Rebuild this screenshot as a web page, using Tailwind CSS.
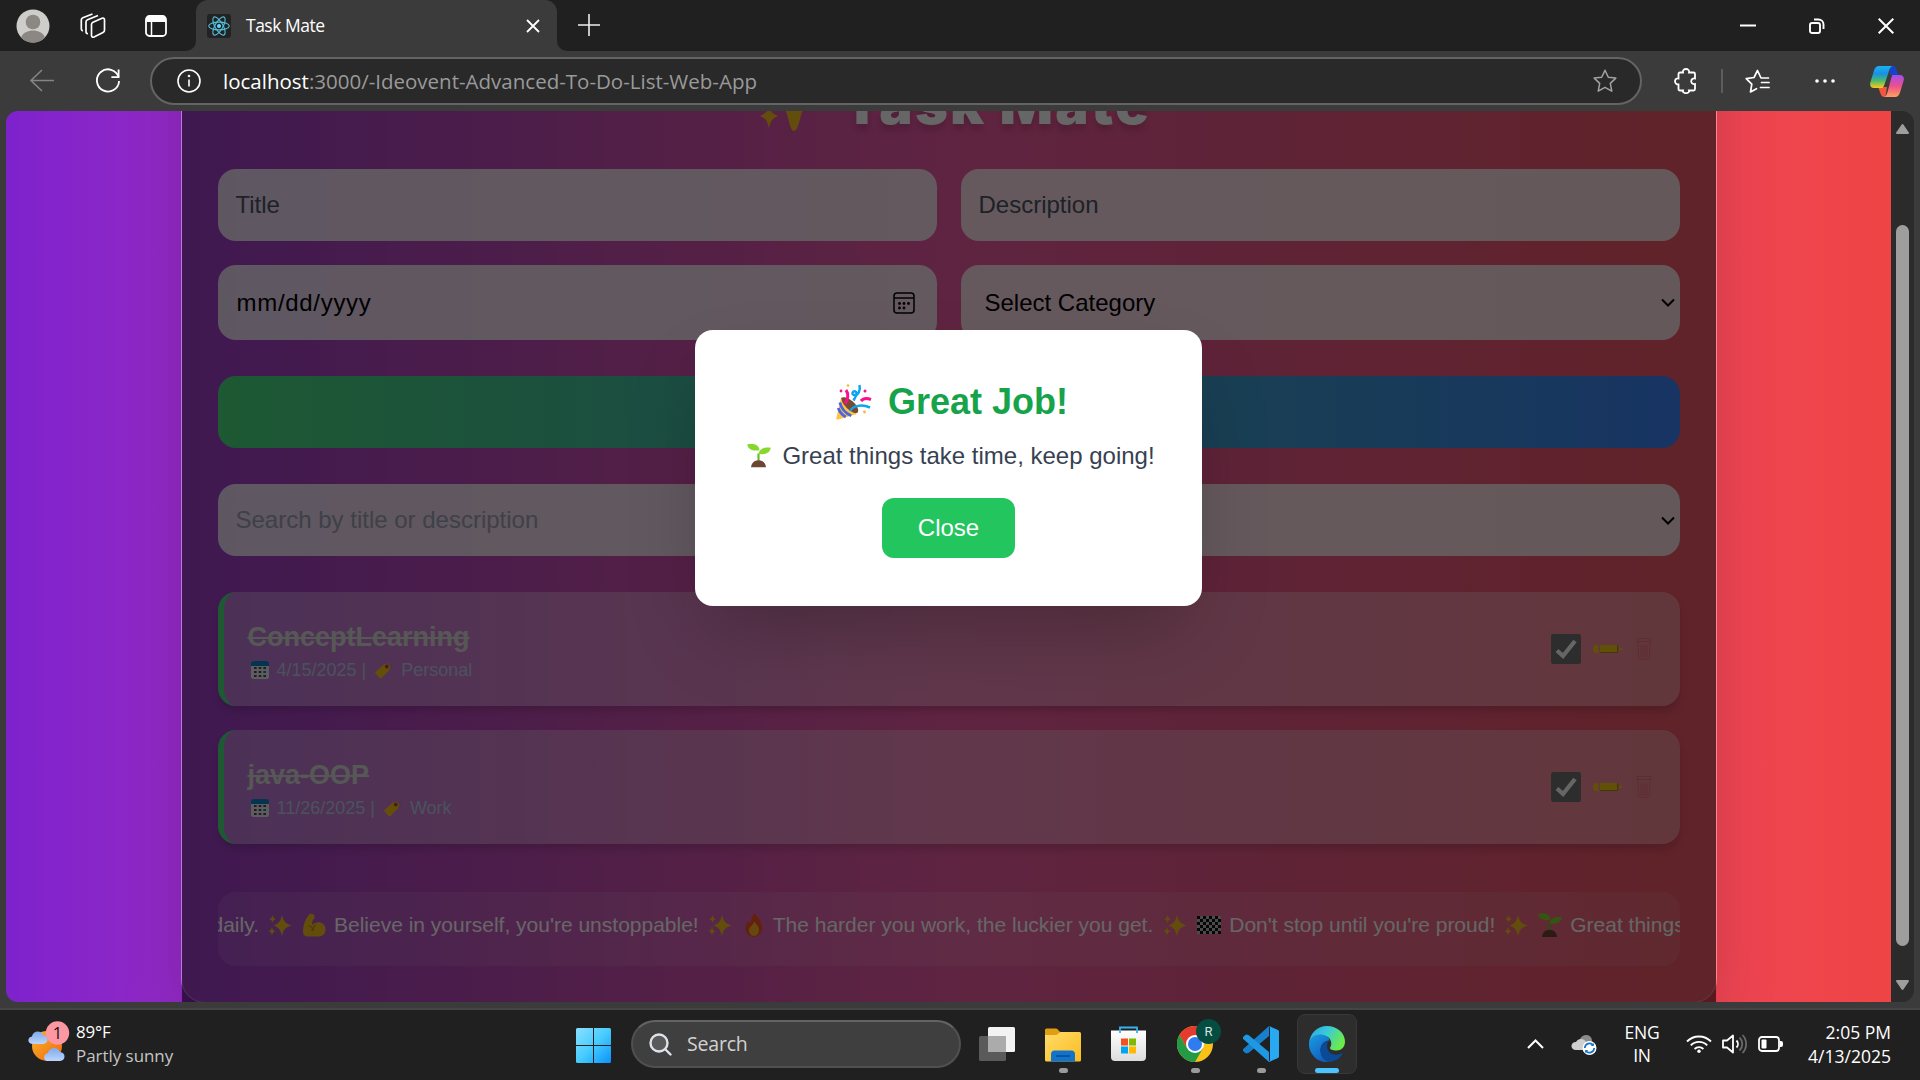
<!DOCTYPE html>
<html lang="en">
<head>
<meta charset="utf-8">
<title>Task Mate</title>
<script src="https://cdn.jsdelivr.net/npm/@tailwindcss/browser@4"></script>
</head>
<body class="w-[1920px] h-[1080px] overflow-hidden bg-[#3b3b3b] font-['Open_Sans',sans-serif] text-white">
<svg class="absolute w-0 h-0">
  <defs>
    <linearGradient id="sun" x1="0" y1="0" x2="1" y2="1"><stop offset="0" stop-color="#f9b52b"/><stop offset="1" stop-color="#f0660c"/></linearGradient>
    <linearGradient id="cloud" x1="0" y1="0" x2="0" y2="1"><stop offset="0" stop-color="#7fa9ee"/><stop offset="1" stop-color="#bcd5fb"/></linearGradient>
    <linearGradient id="win" x1="0" y1="0" x2="1" y2="1"><stop offset="0" stop-color="#8be0ff"/><stop offset=".5" stop-color="#47ccfd"/><stop offset="1" stop-color="#0a93fa"/></linearGradient>
    <linearGradient id="folder" x1="0" y1="0" x2="1" y2="1"><stop offset="0" stop-color="#ffdc6a"/><stop offset="1" stop-color="#fbbc1f"/></linearGradient>
    <linearGradient id="edgeTop" x1="0" y1="0" x2="1" y2=".4"><stop offset="0" stop-color="#2aa3e0"/><stop offset=".5" stop-color="#37c9dc"/><stop offset="1" stop-color="#6bea4e"/></linearGradient>
    <linearGradient id="edgeBody" x1="0" y1="0" x2=".6" y2="1"><stop offset="0" stop-color="#1b9de2"/><stop offset="1" stop-color="#0f5fc0"/></linearGradient>
    <linearGradient id="copA" x1="0" y1="0" x2="0" y2="1"><stop offset="0" stop-color="#19b4f1"/><stop offset=".35" stop-color="#1a8fe6"/><stop offset=".65" stop-color="#45b970"/><stop offset="1" stop-color="#fbc91a"/></linearGradient>
    <linearGradient id="copB" x1="0" y1="0" x2="0" y2="1"><stop offset="0" stop-color="#a24df0"/><stop offset=".5" stop-color="#ee4f8d"/><stop offset="1" stop-color="#fda15c"/></linearGradient>
    <linearGradient id="store" x1="0" y1="0" x2="0" y2="1"><stop offset="0" stop-color="#fff"/><stop offset="1" stop-color="#dcdcdc"/></linearGradient>
  </defs>
  <symbol id="sparkle" viewBox="0 0 24 24"><g fill="#f8c01e"><path d="M14 2c1.600 6.500 3 8.300 9.500 10.500C17 14.500 15.600 16.500 14 23c-1.700-6.500-3.200-8.500-8.500-10.500C11 10.500 12.400 8.500 14 2z"/><path d="M4.500 2c.7 2.600 1.300 3.400 3.500 4-2.200.6-2.800 1.400-3.500 4C3.900 7.400 3.300 6.600 1 6c2.300-.6 2.900-1.400 3.500-4zM4 14c.7 2.700 1.300 3.600 3.700 4.200C5.300 18.800 4.700 19.700 4 22.500 3.300 19.700 2.600 18.800.5 18.200 2.600 17.600 3.300 16.700 4 14z"/></g></symbol>
  <symbol id="sprout" viewBox="0 0 24 24"><path d="M11.500 19V10" stroke="#5fc32a" stroke-width="2.200" fill="none"/><path d="M.3.800C7-.3 12 1 12.500 6.800 6 7.800 1 6.500.3.800z" fill="#86d82c"/><path d="M23.700 4.200C23 9.500 18 11.500 11.500 10.300 12.500 5 17.500 3.500 23.700 4.200z" fill="#86d82c"/><path d="M4 24c.3-4.500 3.500-7.300 7.500-7.300s7.200 2.800 7.500 7.300z" fill="#6d4534"/></symbol>
  <symbol id="bicep" viewBox="0 0 24 24"><path d="M7.500 1.200C9.500.2 12 .8 12.500 3c.3 1.800-.3 2.900-1.500 3.400-.6 1.600-1 3.500-.8 5.600 2-2 5-3 8-2.500 3.800.8 5.500 3.800 5.300 7.500-.2 4.200-3 6.500-7.500 6.500H5.500C2.500 23.500 1 21.500 1 18.500 1 12 3.500 5.500 7.500 1.200z" fill="#f5c022"/><path d="M6.500 12.500c2 .5 4 1.500 5 5.500M13.500 11.500l-4 6.500" stroke="#c98d10" stroke-width="1.200" fill="none"/></symbol>
  <symbol id="flame" viewBox="0 0 24 24"><path d="M12.500 0c1.500 3 7.500 7 7.500 14.500C20 20 16.500 24 12 24s-8.300-3.500-8.300-9c0-3 1.300-5.500 2.800-7 .3 1.500 1 2.300 1.800 2.500C9 6 10.500 3 12.500 0z" fill="#f8501c"/><path d="M12.500 8.500c1 2.500 4.500 4 4.500 8.500 0 3.500-2 5.800-5 5.800S7 20.500 7 17c0-3.500 4-4.500 5.500-8.500z" fill="#fcb52b"/></symbol>
  <symbol id="flag" viewBox="0 0 24 24"><path d="M0 3h24v18H0z" fill="#bbb"/><path d="M0 4.500h24M0 10.500h24M0 16.500h24M3 7.500h21M3 13.500h21M3 19.500h21" stroke="#111" stroke-width="3" stroke-dasharray="3 3"/></symbol>
  <symbol id="cal" viewBox="0 0 18 18"><rect x="0" y="1" width="18" height="17" rx="2.500" fill="#e8e8ee"/><path d="M0 5V3a3 3 0 0 1 3-3h12a3 3 0 0 1 3 3v2z" fill="#0a84c9"/><g fill="#4a4a5a"><path d="M3 6h2.600v2H3zM7.700 6h2.600v2H7.700zM12.300 6H15v2h-2.700zM3 10h2.600v2H3zM7.700 10h2.600v2H7.700zM3 14h2.600v2H3zM7.700 14h2.600v2H7.700zM12.300 14H15v2h-2.700z"/></g><path d="M12.300 10H15v2h-2.700z" fill="#0a84c9"/></symbol>
  <symbol id="tag" viewBox="0 0 18 18"><path d="M.5 11 9 3.200l5.500-.7L15.500 8 6.500 17c-.6.600-1.200.600-1.800 0L.5 12.600c-.4-.5-.4-1.100 0-1.600z" fill="#fcc419"/><circle cx="11.800" cy="5.500" r="1.600" fill="#7a3b55" stroke="#e2484c" stroke-width="1"/><path d="M12 5.500C13 3 17.500 2.500 17 5.500c-.2 1.500-1.500 2.500-3 2.700" stroke="#9a8aa8" fill="none" stroke-width=".9"/></symbol>
  <symbol id="tick" viewBox="0 0 30 30"><rect width="30" height="30" rx="2.500" fill="#717171"/><path d="M6 16.500l6 5.500L24 7" stroke="#fff" stroke-width="4.200" fill="none"/></symbol>
  <symbol id="pencil" viewBox="0 0 30 10"><path d="M4 1h1.500v8H4a4 4 0 0 1 0-8zM7 1h17v8H7zM26.500 2.800l3.500 2.200-3.500 2.200z" fill="#f2c814"/><path d="M7 8h17v1H7zM24 1h1.200v8H24z" fill="#a98c12"/></symbol>
  <symbol id="trash" viewBox="0 0 16 24"><path d="M1 1.500h14v3H1zM2 4.500l.7 17c2 1.700 8.600 1.700 10.600 0l.7-17M5 8v13M7 8v13M9 8v13M11 8v13" stroke="#dc4444" stroke-width=".9" fill="none" opacity=".4"/></symbol>
</svg>

<div class="flex flex-col w-[1920px] h-[1080px]">
  <!-- tab strip -->
  <header class="flex h-[51px] bg-[#202020] shrink-0">
    <div class="flex items-center w-[196px] pl-4">
      <svg class="w-[34px] h-[34px]" viewBox="0 0 34 34"><circle cx="17" cy="17" r="16.500" fill="#cfcdca"/><circle cx="17" cy="13" r="7.300" fill="#8b8783"/><path d="M5 28.500C7 23.500 12 21.500 17 21.500s10 2 12 7a16.500 16.500 0 0 1-24 0z" fill="#8b8783"/></svg>
      <svg class="ml-[30px] w-[26px] h-[26px]" viewBox="0 0 26 26" fill="none" stroke="#fff" stroke-width="1.700" stroke-linejoin="round"><path d="M11.500 11.500c0-1 .5-1.700 1.500-2.200l9-4c1.300-.6 2.500 0 2.500 1.500v10.500c0 1-.5 1.700-1.500 2.200l-9 4.500c-1.300.6-2.500 0-2.500-1.500z"/><path d="M8 20.500c-1 .2-2-.3-2-1.500V9c0-1 .5-1.700 1.500-2.200L18 2.500M3 17.500c-1 .2-1.700-.5-1.700-1.700V7c0-1 .5-1.700 1.500-2.200L12.500 1"/></svg>
      <svg class="ml-[39px] w-[22px] h-[22px]" viewBox="0 0 22 22"><rect x="1" y="1" width="20" height="20" rx="3.500" fill="none" stroke="#fff" stroke-width="1.800"/><path d="M1 7V4.500A3.500 3.500 0 0 1 4.500 1h13A3.500 3.500 0 0 1 21 4.500V7z" fill="#fff"/><path d="M6.500 7v14" stroke="#fff" stroke-width="1.500"/></svg>
    </div>
    <div class="relative flex items-center w-[361px] rounded-t-xl bg-[#3b3b3b] pl-[11px] pr-[17px]">
      <svg class="absolute -left-[10px] bottom-0 w-[10px] h-[10px]" viewBox="0 0 10 10"><path d="M10 0v10H0A10 10 0 0 0 10 0z" fill="#3b3b3b"/></svg>
      <svg class="absolute -right-[10px] bottom-0 w-[10px] h-[10px]" viewBox="0 0 10 10"><path d="M0 0v10h10A10 10 0 0 1 0 0z" fill="#3b3b3b"/></svg>
      <svg class="w-6 h-6" viewBox="0 0 24 24"><rect width="24" height="24" rx="3" fill="#222"/><g fill="none" stroke="#53c1de" stroke-width="1.100"><ellipse cx="12" cy="12" rx="10.300" ry="3.900"/><ellipse cx="12" cy="12" rx="10.300" ry="3.900" transform="rotate(60 12 12)"/><ellipse cx="12" cy="12" rx="10.300" ry="3.900" transform="rotate(120 12 12)"/></g><circle cx="12" cy="12" r="2" fill="#61dafb"/></svg>
      <span class="ml-[15px] text-[17.500px] tracking-[-0.500px]">Task Mate</span>
      <svg class="ml-auto w-[14px] h-[14px]" viewBox="0 0 14 14"><path d="M1 1l12 12M13 1L1 13" stroke="#fff" stroke-width="1.800"/></svg>
    </div>
    <svg class="ml-[21px] mt-[14px] w-[22px] h-[22px]" viewBox="0 0 22 22"><path d="M11 0v22M0 11h22" stroke="#eee" stroke-width="1.600"/></svg>
    <div class="ml-auto flex items-center pr-[26px]">
      <svg class="w-[16px] h-[16px]" viewBox="0 0 16 16"><path d="M0 7.500h16" stroke="#fff" stroke-width="2"/></svg>
      <svg class="ml-[53px] w-[16px] h-[16px]" viewBox="0 0 16 16" fill="none" stroke="#fff" stroke-width="1.900"><rect x="1" y="5" width="10" height="10" rx="2"/><path d="M5 1.500h4.500a5 5 0 0 1 5 5V11"/></svg>
      <svg class="ml-[53px] w-[16px] h-[16px]" viewBox="0 0 16 16"><path d="M.7.700l14.600 14.600M15.300.7L.7 15.300" stroke="#fff" stroke-width="2"/></svg>
    </div>
  </header>

  <!-- toolbar -->
  <div class="flex items-center h-[60px] shrink-0 bg-[#3b3b3b] pl-[29px]">
    <svg class="w-[26px] h-[24px]" viewBox="0 0 26 24"><path d="M25 11.500H2M13 1L2 11.500 13 22" stroke="#858585" stroke-width="1.600" fill="none"/></svg>
    <svg class="ml-[40px] w-[26px] h-[26px]" viewBox="0 0 27 26" fill="none" stroke="#fff" stroke-width="1.900"><path d="M24.500 9A11.500 11.500 0 1 0 25 13"/><path d="M24.500 1v8H17"/></svg>
    <div class="ml-[29px] flex items-center w-[1492px] h-12 rounded-full border-2 border-[#646464] bg-[#292929] pl-[25px] pr-[23px]">
      <svg class="w-6 h-6" viewBox="0 0 24 24" fill="none" stroke="#fff" stroke-width="1.600"><circle cx="12" cy="12" r="11"/><path d="M12 10.500v7"/><circle cx="12" cy="7" r=".5"/></svg>
      <span class="ml-[22px] pt-px text-[20.500px] tracking-[0px] whitespace-nowrap text-[#9a9a9a]"><span class="text-white">localhost</span>:3000/-Ideovent-Advanced-To-Do-List-Web-App</span>
      <svg class="ml-auto w-[24px] h-[24px]" viewBox="0 0 24 24"><path d="M12 1.200l3.300 7 7.500.9-5.500 5.300 1.500 7.800L12 18.300l-6.800 3.900 1.500-7.800L1.200 9.100l7.500-.9z" fill="none" stroke="#a2a2a2" stroke-width="1.500" stroke-linejoin="round"/></svg>
    </div>
    <svg class="ml-[32px] w-[23px] h-[26px]" viewBox="0 0 23 26"><path d="M6 4.500h3C8.500 2.500 10 1 12 1s3.500 1.500 3 3.500h4.500c1 0 1.500.5 1.500 1.500v4.500c-2-.5-3.800.7-3.800 2.700s1.800 3.300 3.800 2.800V21c0 1-.5 1.500-1.500 1.500H15c.5 1.500-1 2.700-3 2.700s-3.500-1.200-3-2.700H6c-1 0-1.500-.5-1.500-1.500v-4.500C2.500 16.500 1 15 1 13.200s1.500-3.200 3.500-2.700V6c0-1 .5-1.500 1.500-1.500z" fill="none" stroke="#fff" stroke-width="1.800"/></svg>
    <div class="ml-[24px] w-[2px] h-6 bg-[#5d5d5d]"></div>
    <svg class="ml-[22px] w-[25px] h-[25px]" viewBox="0 0 25 25" fill="none" stroke="#fff" stroke-width="1.700" stroke-linejoin="round" stroke-linecap="round"><path d="M23.500 9H16L12.500 1.500 9 8.500 1.200 9.700l5.600 5.500L5.500 23l6-3.300"/><path d="M16.500 13.500h7.500M15.500 18.500h8.500" /></svg>
    <svg class="ml-[45px] w-[20px] h-[6px]" viewBox="0 0 20 6" fill="#fff"><circle cx="2" cy="3" r="1.800"/><circle cx="10" cy="3" r="1.800"/><circle cx="18" cy="3" r="1.800"/></svg>
    <svg class="ml-[35px] w-[34px] h-[31px]" viewBox="0 0 34 31"><path d="M20 0h3c3 0 3 2 4 5l1.200 4H20z" fill="#1743c8"/><path d="M8 21h9l-1.500 10c-4 0-4.500-2-5.500-5z" fill="#f4553d"/><path d="M9 0h14c-2.500.5-3 2-4 5l-4.500 13.500C13.500 21.500 12.500 22 11 22H4c-3.500 0-4.500-3-3.500-6L4 4.500C5 1.500 6.500 0 9 0z" fill="url(#copA)"/><path d="M23 9h7c3.500 0 4.500 3 3.500 6L30 26.500c-1 3-2.500 4.500-5 4.500H13c3 0 3.500-2 4.500-5l3.500-13c.7-2.500 1-4 2-4z" fill="url(#copB)"/></svg>
  </div>

  <!-- page -->
  <div class="flex h-[891px] shrink-0 pl-[6px]">
    <main class="flex flex-col justify-end items-center w-[1885px] h-[891px] overflow-hidden rounded-l-xl bg-linear-to-r/srgb from-[#7e22ce] via-[#ec4899] to-[#ef4444] font-['Liberation_Sans',Arial,sans-serif]">
      <section class="relative w-[1536px] h-[1070px] -mb-px shrink-0 flex flex-col rounded-[24px] border border-white/30 bg-white/10 px-9 pb-[35px] shadow-[0_37px_75px_-18px_rgba(0,0,0,0.250)]">
        <h1 class="flex items-end justify-center h-[199px] shrink-0 mb-9 text-[56px] leading-[60px] text-white font-black font-['Inter',sans-serif] [text-shadow:0_6px_6px_rgba(0,0,0,0.150)]">
          <svg class="ml-[14px] w-[62px] h-[62px] mb-[1px]" viewBox="0 0 62 62" fill="#f8c01e"><path d="M34 2c3 1 4 12 8 18 4 5 17 7 17 10s-14 6-17 12c-2 6-4 19-8 19s-5-13-8-19c-2-6-15-9-15-12s12-5 15-10c4-6 5-17 8-18z"/><path d="M9 37c2 5 3.500 6.500 9 9-5.500 2.500-7 4-9 12-2-8-3.500-9.500-9-12 5.500-2.500 7-4 9-9zM12 4c2 6 3.500 7.500 9 9-5.500 2-7 3.500-9 9-2-5.500-3.500-7-9-9 5.500-1.500 7-3 9-9z"/></svg><span class="ml-[21px] mb-[-1px] tracking-[2.200px] whitespace-nowrap">Task Mate</span>
        </h1>
        <div class="grid grid-cols-2 gap-6 text-2xl">
          <div class="flex items-center h-[72px] rounded-[18px] bg-white/80 px-[18px] text-[#4b5563]">Title</div>
          <div class="flex items-center h-[72px] rounded-[18px] bg-white/80 px-[18px] text-[#4b5563]">Description</div>
          <div class="flex items-center justify-between h-[75px] rounded-[18px] bg-white/80 pl-[19px] pr-[22px] text-black"><span class="tracking-[0.700px]">mm/dd/yyyy</span>
            <svg class="w-[22px] h-[22px]" viewBox="0 0 22 22"><rect x="1" y="1" width="20" height="20" rx="3" fill="none" stroke="#000" stroke-width="1.500"/><path d="M1 6h20" stroke="#000" stroke-width="1.500"/><g><circle cx="6.500" cy="11.500" r="1.400"/><circle cx="11" cy="11.500" r="1.400"/><circle cx="15.500" cy="11.500" r="1.400"/><circle cx="6.500" cy="16" r="1.400"/><circle cx="11" cy="16" r="1.400"/></g></svg></div>
          <div class="flex items-center justify-between h-[75px] rounded-[18px] bg-white/80 pl-[24px] pr-[5px] text-black"><span>Select Category</span>
            <svg class="w-[14px] h-[9px]" viewBox="0 0 14 9"><path d="M1 1.500l6 6 6-6" stroke="#000" stroke-width="2" fill="none"/></svg></div>
        </div>
        <div class="mt-9 h-[72px] shrink-0 rounded-[18px] bg-linear-to-r/srgb from-[#4ade80] to-[#3b82f6]"></div>
        <div class="mt-9 grid grid-cols-2 gap-6 text-2xl">
          <div class="flex items-center h-[72px] rounded-[18px] bg-white/80 px-[18px] text-[#9ca3af]">Search by title or description</div>
          <div class="flex items-center justify-end h-[72px] rounded-[18px] bg-white/80 pr-[5px]">
            <svg class="w-[14px] h-[9px]" viewBox="0 0 14 9"><path d="M1 1.500l6 6 6-6" stroke="#000" stroke-width="2" fill="none"/></svg></div>
        </div>
        <ul class="mt-9 flex flex-col gap-6">
          <li class="flex items-center justify-between h-[114px] rounded-[18px] border-l-[6px] border-[#4ade80] bg-white/30 pl-6 pr-[28px] shadow-[0_6px_9px_-1px_rgba(0,0,0,0.150)]">
            <div>
              <h2 class="text-[27px] leading-[42px] font-bold line-through text-[#d8dcd8]">ConceptLearning</h2>
              <p class="flex items-center text-[18px] leading-6 text-[#b8cdea]"><svg class="ml-[3px] mr-[8px] w-[18px] h-[18px]"><use href="#cal"/></svg>4/15/2025 |<svg class="ml-[9px] mr-[8px] w-[18px] h-[18px]"><use href="#tag"/></svg>Personal</p>
            </div>
            <div class="flex items-center"><svg class="w-[30px] h-[30px]"><use href="#tick"/></svg><svg class="ml-[12px] w-[30px] h-[10px]"><use href="#pencil"/></svg><svg class="ml-[13px] w-[16px] h-[24px]"><use href="#trash"/></svg></div>
          </li>
          <li class="flex items-center justify-between h-[114px] rounded-[18px] border-l-[6px] border-[#4ade80] bg-white/30 pl-6 pr-[28px] shadow-[0_6px_9px_-1px_rgba(0,0,0,0.150)]">
            <div>
              <h2 class="text-[27px] leading-[42px] font-bold line-through text-[#d8dcd8]">java-OOP</h2>
              <p class="flex items-center text-[18px] leading-6 text-[#b8cdea]"><svg class="ml-[3px] mr-[8px] w-[18px] h-[18px]"><use href="#cal"/></svg>11/26/2025 |<svg class="ml-[9px] mr-[8px] w-[18px] h-[18px]"><use href="#tag"/></svg>Work</p>
            </div>
            <div class="flex items-center"><svg class="w-[30px] h-[30px]"><use href="#tick"/></svg><svg class="ml-[12px] w-[30px] h-[10px]"><use href="#pencil"/></svg><svg class="ml-[13px] w-[16px] h-[24px]"><use href="#trash"/></svg></div>
          </li>
        </ul>
        <div class="mt-12 h-[74px] shrink-0 overflow-hidden rounded-[18px] bg-white/10 pt-[18px]">
          <div class="flex items-center -ml-[6px] text-[21px] leading-[30px] whitespace-nowrap text-white">daily.<svg class="ml-[9px] mr-[10px] shrink-0 w-[24px] h-[24px]"><use href="#sparkle"/></svg><svg class="mr-[8px] shrink-0 w-[24px] h-[24px]"><use href="#bicep"/></svg>Believe in yourself, you're unstoppable!<svg class="ml-[9px] mr-[10px] shrink-0 w-[24px] h-[24px]"><use href="#sparkle"/></svg><svg class="mr-[7px] shrink-0 w-[24px] h-[24px]"><use href="#flame"/></svg>The harder you work, the luckier you get.<svg class="ml-[10px] mr-[10px] shrink-0 w-[24px] h-[24px]"><use href="#sparkle"/></svg><svg class="mr-[8px] shrink-0 w-[24px] h-[24px]"><use href="#flag"/></svg>Don't stop until you're proud!<svg class="ml-[9px] mr-[10px] shrink-0 w-[24px] h-[24px]"><use href="#sparkle"/></svg><svg class="mr-[8px] shrink-0 w-[24px] h-[24px]"><use href="#sprout"/></svg>Great things take time, keep going!</div>
        </div>

        <!-- modal -->
        <div class="absolute inset-0 flex items-center justify-center bg-black/60">
          <div class="flex flex-col items-center w-[507px] h-[276px] rounded-[18px] bg-white p-12 shadow-[0_37px_75px_-18px_rgba(0,0,0,0.250)]">
            <h2 class="flex items-center text-4xl leading-[48px] font-bold text-[#16a34a] mb-3">
              <svg class="ml-[7px] mr-[16px] w-[36px] h-[36px]" viewBox="0 0 36 36"><path d="M5 14c5-4 19 7 17 14-3 4-16 0-17-14z" fill="#7a4a35"/><path d="M5 14c1 7 9 14 16 16L2 35.500c-1.500.3-2-.5-1.500-2z" fill="#fcc53c"/><path d="M3.800 18.500c1.500 6 6 11 11.500 13.300M2.200 24c1.500 4 4 7 7.500 9" stroke="#4b63e8" stroke-width="2.800" fill="none"/><path d="M10 6c3 4 2 10-1 13.500M25 17c2-2.500 6-3 10-1.500" stroke="#fb0f8c" stroke-width="3" fill="none"/><path d="M23.500 1c1 5-1 11-5.500 10-3-1-1-4.500 1.500-3.500 2 1 1 4-2 9M14 27c3-5.500 12-7 20-3.500" stroke="#0aa5f3" stroke-width="2.500" fill="none"/><g fill="#fb0f8c"><circle cx="5" cy="7" r="1.400"/><circle cx="29" cy="7" r="1.500"/></g><g fill="#fcb53c"><circle cx="12" cy="1.500" r="1.300"/><circle cx="28.500" cy="28" r="1.400"/></g></svg>
              <span>Great Job!</span>
            </h2>
            <p class="flex items-center text-2xl leading-9 whitespace-nowrap text-[#374151] mb-6"><svg class="ml-[5px] mr-[11px] -mt-[2px] w-[24px] h-[25px]" viewBox="0 0 24 24"><use href="#sprout"/></svg>Great things take time, keep going!</p>
            <button class="w-[133px] h-[60px] shrink-0 rounded-xl bg-[#22c55e] text-2xl text-white">Close</button>
          </div>
        </div>
      </section>
    </main>
    <div class="flex flex-col items-center w-[23px] h-[891px] rounded-r-xl bg-[#2b2b2b]">
      <svg class="mt-[12px] w-[15px] h-[12px]" viewBox="0 0 15 12"><path d="M7.500 2L13 10H2z" fill="#9e9e9e" stroke="#9e9e9e" stroke-width="2" stroke-linejoin="round"/></svg>
      <div class="mt-[90px] w-[13px] h-[721px] rounded-full bg-[#9e9e9e]"></div>
      <svg class="mt-[33px] w-[15px] h-[12px]" viewBox="0 0 15 12"><path d="M7.500 10L13 2H2z" fill="#9e9e9e" stroke="#9e9e9e" stroke-width="2" stroke-linejoin="round"/></svg>
    </div>
  </div>
  <div class="h-2 shrink-0 border-b-2 border-[#454545] bg-[#3b3b3b]"></div>

  <!-- taskbar -->
  <footer class="flex items-center h-[70px] shrink-0 bg-[#202020]">
    <div class="flex items-center w-[560px] pl-[28px]">
      <svg class="w-[43px] h-[43px] -mt-[8px]" viewBox="0 0 43 43"><circle cx="19" cy="26" r="15" fill="url(#sun)"/><path d="M5 24c-6 0-6-7-1-7.500C5 10.500 13 10 15 15c6 0 6 9 0 9z" fill="url(#cloud)"/><path d="M19 41c-4-1-4-7 1-8 1-6 10-7 12-1 6 0 6 9 0 9z" fill="url(#cloud)"/><circle cx="29.500" cy="13" r="11.700" fill="#fd98a3"/><text x="29.500" y="19" text-anchor="middle" font-size="16.500" font-family="Open Sans" fill="#111">1</text></svg>
      <div class="ml-[5px] -mt-[2px] text-[16.900px] leading-6"><div class="tracking-[-0.2px]">89°F</div><div class="text-[#c6c6c6] tracking-[0px]">Partly sunny</div></div>
    </div>
    <div class="flex justify-center w-[66px]"><svg class="w-[35px] h-[35px]" viewBox="0 0 35 35"><path d="M1.500 0H17v17H0V1.500A1.500 1.500 0 0 1 1.500 0zM18 0h15.500A1.500 1.500 0 0 1 35 1.500V17H18zM0 18h17v17H1.500A1.500 1.500 0 0 1 0 33.500zM18 18h17v15.500a1.500 1.500 0 0 1-1.500 1.500H18z" fill="url(#win)"/></svg></div>
    <div class="ml-[5px] mr-[3px] flex items-center w-[330px] h-12 -mt-[2px] rounded-full border-2 border-[#505050] border-t-[#636363] bg-[#3f3f3f] pl-[16px]">
      <svg class="w-[23px] h-[23px]" viewBox="0 0 23 23" fill="none" stroke="#dfe3ea" stroke-width="2.400" stroke-linecap="round"><circle cx="10" cy="10" r="8.500" fill="#5a5a5a"/><path d="M16.500 16.500l5 5"/></svg>
      <span class="ml-[15px] text-[19.500px] tracking-[-0.2px] text-[#d2d2d2]">Search</span>
    </div>
    <div class="flex justify-center w-[66px] -mt-[2px]"><svg class="w-[36px] h-[34px]" viewBox="0 0 36 34"><rect x="9" width="27" height="25" rx="1.500" fill="#f3f3f3"/><rect y="9" width="27" height="25" rx="1.500" fill="#5a5a5a"/><path d="M9 9h18v16H9z" fill="#ababab"/></svg></div>
    <div class="relative flex justify-center w-[66px]"><svg class="w-[36px] h-[34px]" viewBox="0 0 36 34"><path d="M0 2a1.500 1.500 0 0 1 1.500-1.500H11c2 0 3 3.500 5 3.500v6H0z" fill="#e09f12"/><path d="M0 7h11c2 0 3-3 5-3h18.500A1.500 1.500 0 0 1 36 5.500V32a1.500 1.500 0 0 1-1.500 1.500h-33A1.500 1.500 0 0 1 0 32z" fill="url(#folder)"/><path d="M6 33.500V26c0-2 1.500-3.500 3.500-3.500h17c2 0 3.500 1.500 3.500 3.500v7.500z" fill="#1273cc"/><path d="M11 28h14" stroke="#0b4c90" stroke-width="1.600"/></svg><span class="absolute top-[40px] left-[28.500px] w-[9px] h-[5px] rounded-full bg-[#9b9b9b]"></span></div>
    <div class="flex justify-center w-[66px] pr-[2px] -mt-[2px]"><svg class="w-[35px] h-[36px]" viewBox="0 0 35 36"><path d="M0 4.500h35V31a4 4 0 0 1-4 4H4a4 4 0 0 1-4-4z" fill="url(#store)"/><path d="M9 7V1.500h17V7" stroke="#35b3ee" stroke-width="1.800" fill="none"/><path d="M10 12.500h7v7h-7z" fill="#f25022"/><path d="M18 12.500h7v7h-7z" fill="#7fba00"/><path d="M10 20.500h7v7h-7z" fill="#00a4ef"/><path d="M18 20.500h7v7h-7z" fill="#ffb900"/></svg></div>
    <div class="relative flex justify-center w-[66px] -mt-[2px]"><svg class="w-[36px] h-[36px]" viewBox="0 0 36 36"><circle cx="18" cy="18" r="18" fill="#fbc116"/><path d="M2.400 9a18 18 0 0 1 31.200 0H18L10.200 22.500z" fill="#e33b2e"/><path d="M2.400 9a18 18 0 0 0 15.600 27L25.800 22.500h-15.600z" fill="#249a47"/><circle cx="18" cy="18" r="9" fill="#fff"/><circle cx="18" cy="18" r="7" fill="#2f7bf0"/></svg><span class="absolute -top-[7px] left-[34px] flex items-center justify-center w-[25px] h-[25px] rounded-full bg-[#044d40] text-[13px] leading-none font-['Roboto',sans-serif] text-[#d8e4e0]">R</span><span class="absolute top-[42px] left-[28.500px] w-[9px] h-[5px] rounded-full bg-[#9b9b9b]"></span></div>
    <div class="relative flex justify-center w-[66px] -mt-[2px]"><svg class="w-[36px] h-[36px]" viewBox="0 0 36 36"><path d="M26 0v10L5.500 27 3 27.500 0 25c-.5-.7-.5-1.200 0-1.800z" fill="#1780cd"/><path d="M26 36V26L5.500 9 3 8.500 0 11c-.5.700-.5 1.200 0 1.800z" fill="#1f98e4"/><path d="M26 0l9 4c.7.500 1 1 1 1.700v24.600c0 .7-.3 1.200-1 1.700l-9 4c-.5-.3 1-1 1-2V2c0-1-.5-1.500-1-2z" fill="#2aa9f3"/></svg><span class="absolute top-[42px] left-[28.500px] w-[9px] h-[5px] rounded-full bg-[#9b9b9b]"></span></div>
    <div class="relative ml-[3px] flex justify-center items-center w-[60px] h-[60px] -mt-[2px] rounded-lg border border-[#383838] bg-[#2d2d2d]"><svg class="w-[36px] h-[36px]" viewBox="0 0 36 36"><path d="M0 17C1 10 7 8 11 8c6 0 9 3.500 9.500 6.500-5 0-9 4-9 9.500 0 6 4 11 9 12A18 18 0 0 1 0 17z" fill="url(#edgeBody)"/><path d="M11.500 24c0 6 4 11 9 12 6-.5 10.500-4 12.700-7.500.5-1-.2-1.500-1-1-8.200 3.500-14.200-1-14.200-7.500 0-3 1-4.500 2.500-5.500-5 .5-9 4-9 9.500z" fill="#0b4a97"/><path d="M0 17C1 7 8.500 0 18 0c10 0 18 7 18 15.500 0 6-4 9-8.500 9-4 0-6.500-1-6.500-2.500 0-1 1.300-1.500 1.300-4.500C22.300 12 17 8.500 11.500 8.500 5 8.500 1 12.500 0 17z" fill="url(#edgeTop)"/></svg><span class="absolute bottom-[0px] left-[17px] w-[24px] h-[5px] rounded-full bg-[#4cc2ff]"></span></div>
    <div class="ml-auto flex items-center h-full pr-[29px]">
      <svg class="w-[17px] h-[10px] -mt-[3px]" viewBox="0 0 17 10"><path d="M1 9l7.500-7.500L16 9" stroke="#fff" stroke-width="2" fill="none"/></svg>
      <svg class="ml-[27px] w-[26px] h-[22px]" viewBox="0 0 26 22"><path d="M9 5C12-1 20 0 21 6l-2 10H5z" fill="#8b8b8b"/><path d="M5 16C-1 16-1 8 5 8c2-4 8-4 10 0l3 8z" fill="#cfcfcf"/><circle cx="18.500" cy="14" r="7" fill="#fff"/><path d="M13.800 14a4.700 4.700 0 0 1 8.500-2.700M23.200 14a4.700 4.700 0 0 1-8.500 2.700" stroke="#1474c8" stroke-width="1.700" fill="none"/><path d="M22.800 9v3h-3zM14.200 19v-3h3z" fill="#1474c8"/></svg>
      <div class="ml-[26px] -mt-[2px] w-[38px] text-center text-[17.500px] leading-[23px] tracking-[-0.2px]">ENG<br>IN</div>
      <svg class="ml-[25px] -mt-[3px] w-[26px] h-[20px]" viewBox="0 0 26 20" fill="none" stroke="#fff" stroke-width="1.900"><path d="M1 7.500a17 17 0 0 1 24 0M4.800 11.300a11.600 11.600 0 0 1 16.400 0M8.600 15a6.200 6.200 0 0 1 8.800 0"/><circle cx="13" cy="17.300" r="1.700" fill="#fff" stroke="none"/></svg>
      <svg class="ml-[10px] -mt-[2px] w-[26px] h-[20px]" viewBox="0 0 26 20" fill="none" stroke="#fff" stroke-width="1.800" stroke-linejoin="round"><path d="M1 6.500h4L11 1.500v17L5 13.500H1z"/><path d="M14.500 6.500a5 5 0 0 1 0 7"/><path d="M17.500 3.500a9 9 0 0 1 0 13M20.500 1a13 13 0 0 1 0 18" stroke="#6a6a6a"/></svg>
      <svg class="ml-[10px] -mt-[2px] w-[26px] h-[18px]" viewBox="0 0 26 18"><rect x="1" y="2" width="20" height="14" rx="3" fill="none" stroke="#fff" stroke-width="1.800"/><rect x="3.500" y="4.500" width="5" height="9" rx="1" fill="#fff"/><path d="M22 6h1a2 2 0 0 1 2 2v2a2 2 0 0 1-2 2h-1z" fill="#fff"/></svg>
      <div class="ml-[22px] -mt-[3px] w-[85px] text-right text-[17.500px] leading-[24px] whitespace-nowrap">2:05 PM<br>4/13/2025</div>
    </div>
  </footer>
</div>
</body>
</html>
